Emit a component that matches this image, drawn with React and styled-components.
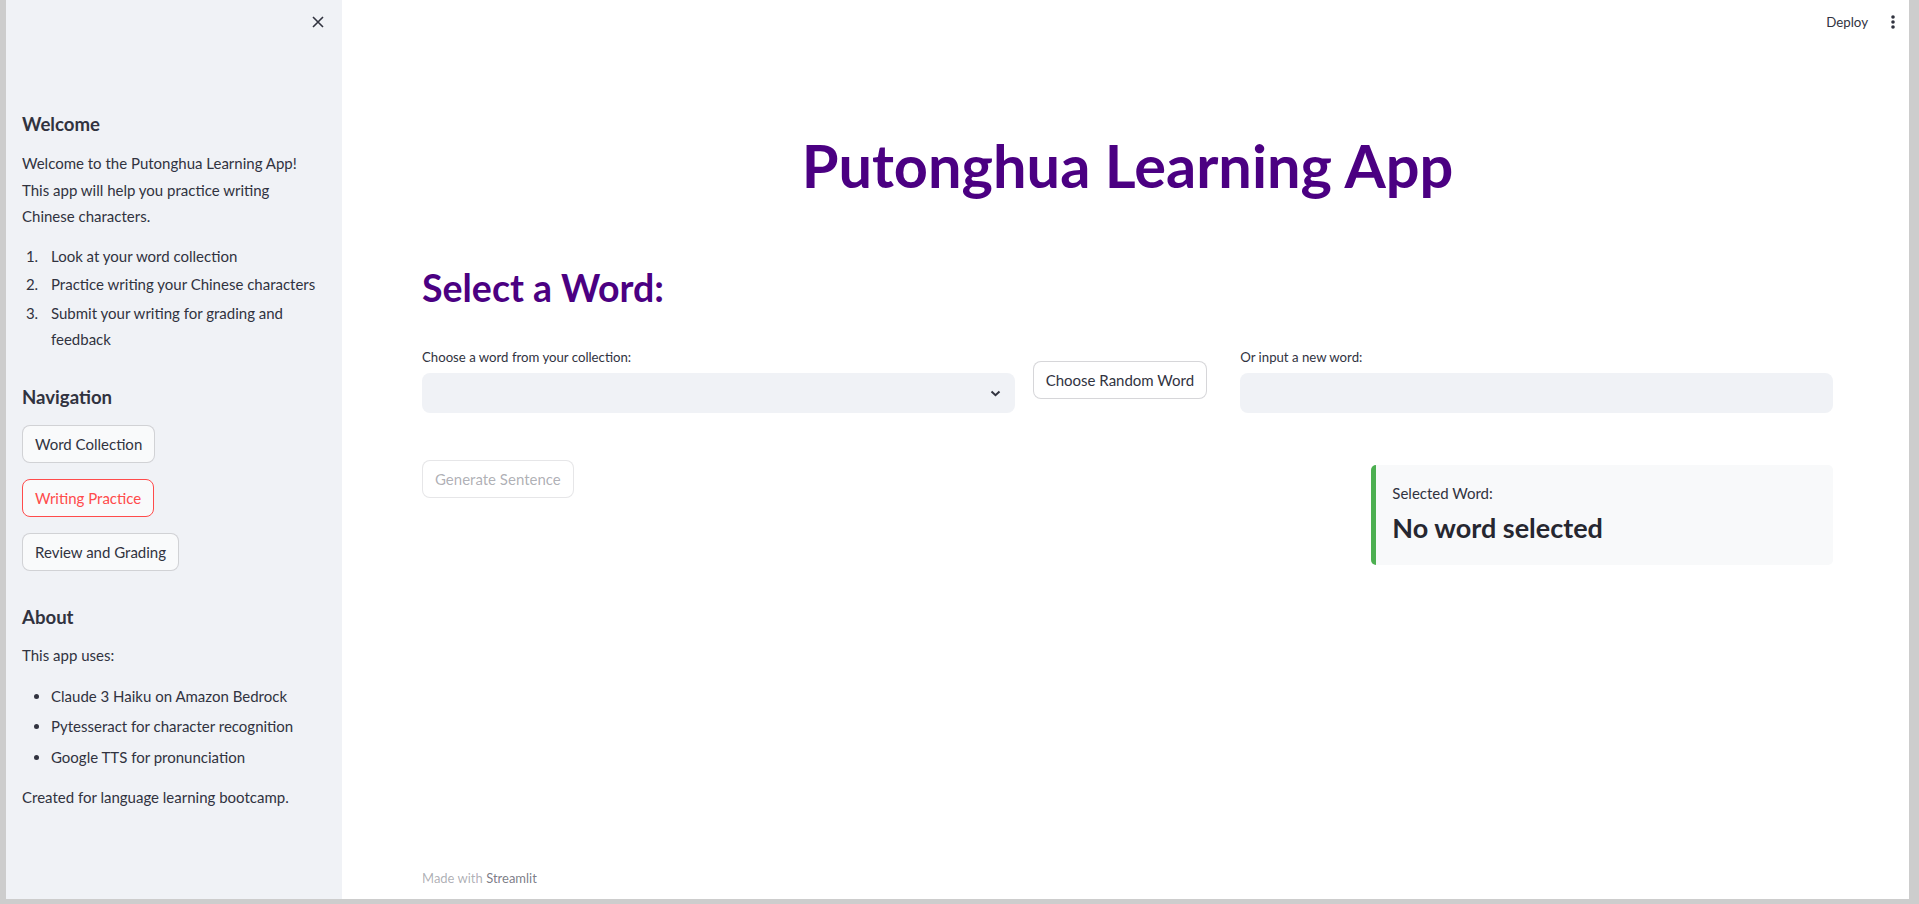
import styled, { createGlobalStyle } from 'styled-components';

const GlobalStyle = createGlobalStyle`
    html, body {
        margin: 0;
        padding: 0;
        background: #cdcdcd;
    }
    body {
        font-family: Lato, "Noto Sans", sans-serif;
        color: #31333f;
    }
    * { box-sizing: border-box; }
`

const Frame = styled.div`
    width: 1919px;
    height: 904px;
    padding: 0 10px 5px 6px;
    background: #cdcdcd;
    overflow: hidden;
`

const AppShell = styled.div`
    display: flex;
    height: 100%;
    background: #fff;
`

const Sidebar = styled.aside`
    width: 336px;
    flex-shrink: 0;
    background: #f0f2f6;
    padding: 0 20px 0 16px;
`

const SidebarTop = styled.div`
    height: 44px;
    display: flex;
    align-items: center;
    justify-content: flex-end;
    margin-right: -2px;
    margin-bottom: 68px;
`

const IconButton = styled.button`
    border: none;
    background: none;
    padding: 0;
    display: flex;
    color: #31333f;
    cursor: pointer;
`

const SideHeading = styled.h3`
    margin: ${p => p.$top || 0}px 0 0;
    font-size: 18.6px;
    line-height: 24px;
    font-weight: 700;
    color: #31333f;
`

const Para = styled.p`
    margin: ${p => p.$top || 0}px 0 0;
    font-size: 15px;
    line-height: ${p => p.$lh || 26}px;
`

const NumList = styled.ol`
    margin: 14px 0 0;
    padding-left: 20px;
    font-size: 15px;
    line-height: 25.6px;
    li {
        padding-left: 9px;
        margin-bottom: 3.4px;
    }
`

const BulletList = styled.ul`
    margin: 15px 0 0;
    padding-left: 29px;
    font-size: 15px;
    line-height: 26px;
    li {
        margin-bottom: 4.5px;
    }
`

const NavStack = styled.div`
    display: flex;
    flex-direction: column;
    align-items: flex-start;
    gap: 16px;
    margin-top: 16px;
`

const Button = styled.button`
    height: 38px;
    padding: 0 12px;
    font-family: inherit;
    font-size: 15px;
    border-radius: 8px;
    background: ${p => p.$bg || '#fff'};
    border: 1px solid ${p => p.$active ? '#ff4b4b' : 'rgba(49, 51, 63, 0.2)'};
    color: ${p => p.$active ? '#ff4b4b' : p.disabled ? 'rgba(49, 51, 63, 0.4)' : '#31333f'};
    border-color: ${p => p.disabled ? 'rgba(49, 51, 63, 0.12)' : undefined};
    cursor: pointer;
`

const Main = styled.main`
    flex: 1;
    display: flex;
    flex-direction: column;
`

const Header = styled.header`
    height: 44px;
    display: flex;
    align-items: center;
    justify-content: flex-end;
    gap: 22px;
    padding-right: 13px;
    font-size: 13.3px;
`

const Content = styled.div`
    flex: 1;
    padding: 0 76px 0 80px;
`

const Title = styled.h1`
    margin: 86px 0 0;
    text-align: center;
    font-size: 59.5px;
    line-height: 70px;
    font-weight: 700;
    color: #4b0082;
`

const SubTitle = styled.h2`
    margin: 66px 0 0;
    font-size: 37.5px;
    line-height: 44px;
    font-weight: 700;
    color: #4b0082;
`

const Row = styled.div`
    display: grid;
    grid-template-columns: ${p => p.$cols};
    gap: 14px;
    margin-top: ${p => p.$top}px;
    align-items: start;
`

const Field = styled.div`
    display: flex;
    flex-direction: column;
`

const Label = styled.label`
    font-size: 13.2px;
    line-height: 22px;
    margin-bottom: 5px;
`

const SelectBox = styled.div`
    height: 40px;
    border-radius: 8px;
    background: #f0f2f6;
    display: flex;
    align-items: center;
    justify-content: flex-end;
    padding-right: 14px;
`

const TextInput = styled.input`
    height: 40px;
    border-radius: 8px;
    background: #f0f2f6;
    border: none;
    outline: none;
    padding: 0 12px;
    font-family: inherit;
    font-size: 15px;
`

const ButtonCell = styled.div`
    padding-top: 15px;
    padding-left: 4px;
`

const InfoBox = styled.div`
    margin-top: 5px;
    margin-left: 4px;
    background: #f8f9fa;
    border-left: 5px solid #4caf50;
    border-radius: 5px;
    padding: 16px 16px 20px;
`

const InfoLabel = styled.p`
    margin: 0;
    font-size: 15px;
    line-height: 24px;
`

const InfoValue = styled.h3`
    margin: 6px 0 0;
    font-size: 27px;
    line-height: 34px;
    font-weight: 700;
    color: #262730;
`

const Footer = styled.footer`
    padding: 0 80px 10px;
    font-size: 13px;
    line-height: 22px;
    color: rgba(49, 51, 63, 0.4);
    span {
        color: rgba(49, 51, 63, 0.65);
    }
`

const CloseIcon = () => (
    <svg width="12" height="12" viewBox="0 0 12 12">
        <path d="M1 1 L11 11 M11 1 L1 11" stroke="#31333f" strokeWidth="1.6" fill="none" />
    </svg>
)

const MoreIcon = () => (
    <svg width="6" height="14" viewBox="0 0 6 14">
        <circle cx="3" cy="2" r="1.8" fill="#31333f" />
        <circle cx="3" cy="7" r="1.8" fill="#31333f" />
        <circle cx="3" cy="12" r="1.8" fill="#31333f" />
    </svg>
)

const Chevron = () => (
    <svg width="11" height="7" viewBox="0 0 11 7">
        <path d="M1.5 1.5 L5.5 5.2 L9.5 1.5" stroke="#31333f" strokeWidth="2" fill="none" />
    </svg>
)

const App = () => {
    return (
        <Frame>
            <GlobalStyle />
            <AppShell>
                <Sidebar>
                    <SidebarTop>
                        <IconButton><CloseIcon /></IconButton>
                    </SidebarTop>
                    <SideHeading>Welcome</SideHeading>
                    <Para $top={14} $lh={26.5}>
                        Welcome to the Putonghua Learning App! This app will help you practice writing Chinese characters.
                    </Para>
                    <NumList>
                        <li>Look at your word collection</li>
                        <li>Practice writing your Chinese characters</li>
                        <li>Submit your writing for grading and feedback</li>
                    </NumList>
                    <SideHeading $top={32}>Navigation</SideHeading>
                    <NavStack>
                        <Button $bg="#f9fafb">Word Collection</Button>
                        <Button $bg="#f9fafb" $active>Writing Practice</Button>
                        <Button $bg="#f9fafb">Review and Grading</Button>
                    </NavStack>
                    <SideHeading $top={34}>About</SideHeading>
                    <Para $top={13}>This app uses:</Para>
                    <BulletList>
                        <li>Claude 3 Haiku on Amazon Bedrock</li>
                        <li>Pytesseract for character recognition</li>
                        <li>Google TTS for pronunciation</li>
                    </BulletList>
                    <Para $top={14}>Created for language learning bootcamp.</Para>
                </Sidebar>
                <Main>
                    <Header>
                        <span>Deploy</span>
                        <MoreIcon />
                    </Header>
                    <Content>
                        <Title>Putonghua Learning App</Title>
                        <SubTitle>Select a Word:</SubTitle>
                        <Row $cols="3fr 1fr 3fr" $top={36}>
                            <Field>
                                <Label>Choose a word from your collection:</Label>
                                <SelectBox><Chevron /></SelectBox>
                            </Field>
                            <ButtonCell>
                                <Button>Choose Random Word</Button>
                            </ButtonCell>
                            <Field>
                                <Label>Or input a new word:</Label>
                                <TextInput />
                            </Field>
                        </Row>
                        <Row $cols="2fr 1fr" $top={47}>
                            <div>
                                <Button disabled>Generate Sentence</Button>
                            </div>
                            <InfoBox>
                                <InfoLabel>Selected Word:</InfoLabel>
                                <InfoValue>No word selected</InfoValue>
                            </InfoBox>
                        </Row>
                    </Content>
                    <Footer>Made with <span>Streamlit</span></Footer>
                </Main>
            </AppShell>
        </Frame>
    )
}

export default App
